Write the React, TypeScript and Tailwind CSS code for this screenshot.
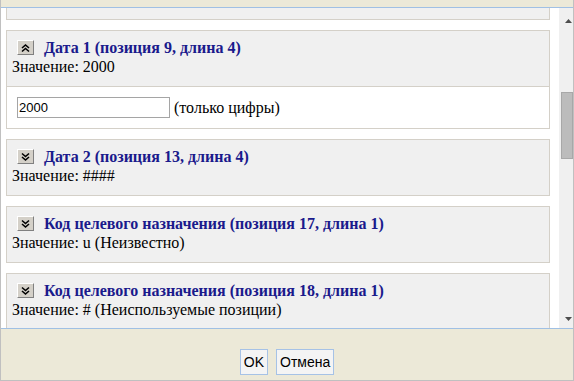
import React from 'react';

interface Field {
  title: string;
  value: string;
  open?: boolean;
}

const fields: Field[] = [
  { title: 'Дата 1 (позиция 9, длина 4)', value: '2000', open: true },
  { title: 'Дата 2 (позиция 13, длина 4)', value: '####' },
  { title: 'Код целевого назначения (позиция 17, длина 1)', value: 'u (Неизвестно)' },
  { title: 'Код целевого назначения (позиция 18, длина 1)', value: '# (Неиспользуемые позиции)' },
];

function ToggleButton({ open }: { open?: boolean }) {
  // double chevron, up when the panel is expanded
  const rows = open ? ['1,5 4.5,2 8,5', '1,8.5 4.5,5.5 8,8.5'] : ['1,1.5 4.5,4.5 8,1.5', '1,5 4.5,8 8,5'];
  return (
    <button
      type="button"
      className="ml-[5px] flex h-[15px] w-[17px] items-center justify-center border border-t-white border-l-white border-r-[#808080] border-b-[#808080] bg-[#d4d0c8]"
    >
      <svg width="9" height="10" viewBox="0 0 9 10">
        {rows.map((points) => (
          <polyline key={points} points={points} fill="none" stroke="#000" strokeWidth="1.6" />
        ))}
      </svg>
    </button>
  );
}

function FieldPanel({ field }: { field: Field }) {
  return (
    <div className="mt-[10px] border border-[#d4d0c8] bg-[#f0f0f0]">
      <div className="h-[55px] pl-[5px] pt-[6px]">
        <div className="flex h-[21px] items-center">
          <ToggleButton open={field.open} />
          <span className="ml-[10px] whitespace-nowrap text-[16px] font-bold leading-[20px] text-[#1a1a8c]">
            {field.title}
          </span>
        </div>
        <div className="whitespace-nowrap text-[16px] leading-[18px] text-black">Значение: {field.value}</div>
      </div>
      {field.open ? (
        <div className="flex h-[42px] items-center border-t border-[#d4d0c8] bg-white pl-[10px]">
          <input
            type="text"
            defaultValue={field.value}
            className="h-[21px] w-[153px] border border-[#a5a5a5] bg-white px-[1px] font-['Liberation_Sans',Arial,sans-serif] text-[13px] text-black outline-none"
          />
          <span className="ml-[4px] text-[16px] leading-[18px] text-black">(только цифры)</span>
        </div>
      ) : null}
    </div>
  );
}

function Scrollbar() {
  return (
    <div className="flex h-full w-[14px] shrink-0 flex-col bg-[#f0f0f0]">
      <div className="flex h-[14px] items-end justify-end pr-[1px]">
        <svg width="7" height="4" viewBox="0 0 7 4" className="mb-[-1px]">
          <path d="M3.5 0L7 4H0z" fill="#4d4d4d" />
        </svg>
      </div>
      <div className="ml-[2px] mt-[70px] h-[67px] w-[12px] border border-[#a8a8a8] bg-[#bcbcbc]" />
      <div className="flex flex-1 items-end justify-end pb-[7px] pr-[1px]">
        <svg width="7" height="4" viewBox="0 0 7 4">
          <path d="M0 0h7L3.5 4z" fill="#4d4d4d" />
        </svg>
      </div>
    </div>
  );
}

export default function App() {
  return (
    <div className="flex h-[381px] w-[574px] flex-col border-x border-b border-[#c0c0c0] bg-[#ece9d8] font-['Liberation_Serif','Times_New_Roman',serif]">
      <div className="h-[8px] shrink-0 border-b border-[#a0c0e4]" />
      <div className="flex h-[320px] shrink-0 overflow-hidden bg-white">
        <div className="flex-1 overflow-hidden pl-[5px] pr-[9px]">
          <div className="h-[12px] border-x border-b border-[#d4d0c8] bg-[#f0f0f0]" />
          {fields.map((field) => (
            <FieldPanel key={field.title} field={field} />
          ))}
        </div>
        <Scrollbar />
      </div>
      <div className="flex flex-1 items-start justify-center gap-[8px] border-t border-[#a0c0e4] pt-[20px] font-['Liberation_Sans',Arial,sans-serif]">
        <button
          type="button"
          className="h-[26px] border border-[#a6c2e6] bg-[#f4f4f4] px-[3px] text-[14px] leading-none text-black"
        >
          OK
        </button>
        <button
          type="button"
          className="h-[26px] border border-[#a6c2e6] bg-[#f4f4f4] px-[3px] text-[14px] leading-none text-black"
        >
          Отмена
        </button>
      </div>
    </div>
  );
}
